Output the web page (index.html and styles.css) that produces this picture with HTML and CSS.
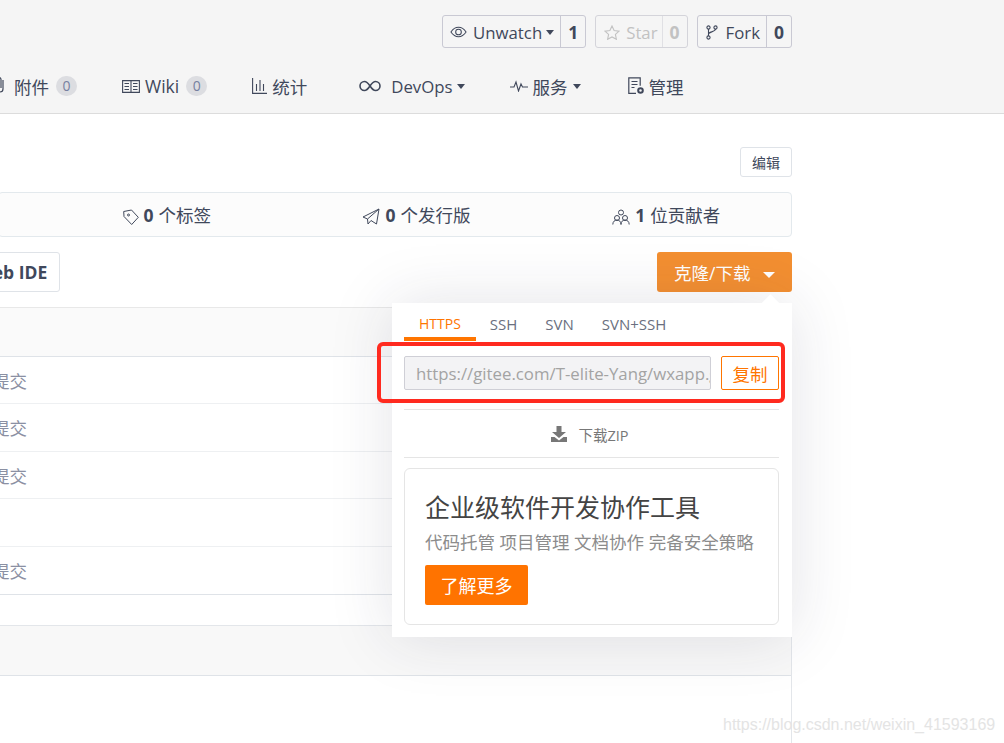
FILE: index.html
```html
<!DOCTYPE html>
<html lang="zh-CN">
<head>
    <meta charset="UTF-8">
    <title>wxapp</title>
    <link rel="stylesheet" href="styles.css">
</head>
<body>

    <div class="header">
        <div class="wrap">
            <div class="actions">
                <div class="action watch">
                    <span class="action-main">
                        <svg width="17" height="12" viewBox="0 0 18 12" fill="none" stroke="currentColor" stroke-width="1.1"><path d="M1 6c2-3 5-5 8-5s6 2 8 5c-2 3-5 5-8 5S3 9 1 6z"/><circle cx="9" cy="6" r="3"/></svg>
                        <span>Unwatch</span> <i class="caret"></i>
                    </span>
                    <b class="action-count">1</b>
                </div>
                <div class="action disabled">
                    <span class="action-main">
                        <svg width="16" height="15" viewBox="0 0 16 15" fill="none" stroke="currentColor" stroke-width="1.1"><path d="M8 1l2.1 4.500 4.900.6-3.600 3.300 1 4.900L8 11.900l-4.400 2.400 1-4.900L1 6.100l4.900-.6z"/></svg>
                        <span>Star</span>
                    </span>
                    <b class="action-count">0</b>
                </div>
                <div class="action">
                    <span class="action-main">
                        <svg class="fork-icon" width="12" height="15" viewBox="0 0 12 15" fill="none" stroke="currentColor" stroke-width="1.1"><circle cx="2.500" cy="2.500" r="1.600"/><circle cx="2.500" cy="12.500" r="1.600"/><circle cx="9.500" cy="2.500" r="1.600"/><path d="M2.500 4.100v6.800M9.500 4.100c0 3-7 2.500-7 5"/></svg>
                        <span>Fork</span>
                    </span>
                    <b class="action-count">0</b>
                </div>
            </div>
            <div class="nav">
                <a class="nav-item first">
                    <svg class="clip-icon" width="12" height="17" viewBox="0 0 12 17" fill="none" stroke="currentColor" stroke-width="1.200"><path d="M9 4v9a3 3 0 0 1-6 0V3.500a2 2 0 0 1 4 0V12"/></svg>
                    附件 <span class="badge">0</span>
                </a>
                <a class="nav-item">
                    <svg width="18" height="13" viewBox="0 0 18 13" fill="none" stroke="currentColor" stroke-width="1.100"><path d="M.6.600h16.800v11.800H.6zM9 .6v11.800M2.500 3.500h4.500M2.500 6.500h4.500M2.500 9.500h4.500M11 3.500h4.500M11 6.500h4.500M11 9.500h4.500"/></svg>
                    Wiki <span class="badge">0</span>
                </a>
                <a class="nav-item">
                    <svg width="15" height="16" viewBox="0 0 15 16" fill="none" stroke="currentColor" stroke-width="1.100"><path d="M.6 0v15.400H15M4.500 6v7M8 2v11M11.500 6v7"/></svg>
                    统计
                </a>
                <a class="nav-item devops">
                    <svg width="22" height="12" viewBox="0 0 22 12" fill="none" stroke="currentColor" stroke-width="1.600"><path d="M11 6C9 3 7.500 1.500 5.500 1.500a4.500 4.500 0 0 0 0 9C7.500 10.500 9 9 11 6s3.500-4.500 5.500-4.500a4.500 4.500 0 0 1 0 9C14.500 10.500 13 9 11 6z"/></svg>
                    <span class="nav-text">DevOps</span> <i class="caret"></i>
                </a>
                <a class="nav-item">
                    <svg width="18" height="12" viewBox="0 0 18 12" fill="none" stroke="currentColor" stroke-width="1.100"><path d="M0 7h4l2-5 2.500 9L11 4l1.500 3H18"/></svg>
                    服务 <i class="caret"></i>
                </a>
                <a class="nav-item manage">
                    <svg width="16" height="18" viewBox="0 0 16 18" fill="none" stroke="currentColor" stroke-width="1.200"><path d="M8 16.400H.8V.8h11.400v8M3.500 4.500h6M3.500 7.500h6M3.500 10.500h3"/><circle cx="12.500" cy="13.500" r="2.300" stroke-width="2"/></svg>
                    管理
                </a>
            </div>
        </div>
    </div>

    <div class="wrap content">
        <div class="desc-bar">
            <button class="btn-edit">编辑</button>
        </div>

        <div class="stats">
            <div class="stat">
                <svg width="16" height="16" viewBox="0 0 16 16" fill="none" stroke="currentColor" stroke-width="1"><path d="M1 7.500L.7 2.500 8.500 1l6.800 7.300-6.600 7.200z"/><circle cx="5.500" cy="6" r="1"/></svg>
                <b>0</b> 个标签
            </div>
            <div class="stat">
                <svg width="18" height="17" viewBox="0 0 18 17" fill="none" stroke="currentColor" stroke-width="1"><path d="M17 1L1 9l4.500 2L17 1l-2.500 15-5.500-3.500-3 3.500-.5-5"/></svg>
                <b>0</b> 个发行版
            </div>
            <div class="stat">
                <svg width="18" height="16" viewBox="0 0 18 16" fill="none" stroke="currentColor" stroke-width="1"><circle cx="9" cy="3.500" r="2.500"/><circle cx="5" cy="9" r="2.500"/><circle cx="13" cy="9" r="2.500"/><path d="M.8 15.500c0-3 2-4.500 4.200-4.500s4 1.500 4 4.500c0-3 1.800-4.500 4-4.500s4.200 1.500 4.200 4.500"/></svg>
                <b>1</b> 位贡献者
            </div>
        </div>

        <div class="toolbar">
            <button class="btn-ide">Web IDE</button>
            <button class="btn-clone">克隆/下载 <i class="caret"></i></button>
        </div>

        <div class="files">
            <div class="files-head"></div>
            <div class="file-row">提交</div>
            <div class="file-row tall">提交</div>
            <div class="file-row">提交</div>
            <div class="file-row tall"></div>
            <div class="file-row tall last">提交</div>
            <div class="file-spacer"></div>
            <div class="readme-head"></div>
            <div class="readme-body"></div>
        </div>

        <div class="clone-panel">
            <i class="panel-arrow"></i>
            <div class="tabs">
                <span class="tab active">HTTPS</span>
                <span class="tab">SSH</span>
                <span class="tab">SVN</span>
                <span class="tab">SVN+SSH</span>
            </div>
            <div class="url-row">
                <input class="url-input" value="https://gitee.com/T-elite-Yang/wxapp.git" disabled>
                <button class="btn-copy">复制</button>
            </div>
            <div class="zip-row">
                <svg width="16" height="16" viewBox="0 0 16 16" fill="currentColor"><path d="M5.500 0h5v6H15L8 12 1 6h4.500zM0 11h3.500L8 14.500 12.500 11H16v5H0z"/></svg>
                下载ZIP
            </div>
            <div class="promo">
                <div class="promo-title">企业级软件开发协作工具</div>
                <div class="promo-sub">代码托管 项目管理 文档协作 完备安全策略</div>
                <button class="btn-more">了解更多</button>
            </div>
        </div>

        <div class="highlight"></div>
    </div>

    <div class="watermark">https://blog.csdn.net/weixin_41593169</div>

</body>
</html>
```

FILE: styles.css
```css
* {
    box-sizing: border-box;
}

body {
    margin: 0;
    height: 743px;
    overflow: hidden;
    position: relative;
    background-color: #fff;
    color: #40485b;
    font-family: "Open Sans", "Noto Sans CJK SC", sans-serif;
    font-size: 17.5px;
}

button {
    font-family: inherit;
    cursor: pointer;
}

.wrap {
    width: 792px;
}

.caret {
    display: inline-block;
    border-top: 5px solid currentColor;
    border-left: 4.5px solid transparent;
    border-right: 4.5px solid transparent;
    vertical-align: middle;
}

/* header */
.header {
    height: 114px;
    background-color: #f5f5f5;
    border-bottom: 1px solid #dcdcdc;
}

.actions {
    display: flex;
    justify-content: flex-end;
    gap: 9px;
    padding-top: 15px;
}

.action {
    display: flex;
    height: 33px;
    border: 1px solid #c9c9d3;
    border-radius: 3px;
    font-size: 16.8px;
    line-height: 31px;
}

.action-main {
    display: flex;
    align-items: center;
    gap: 6px;
    padding: 1px 6px 0 8px;
    border-right: 1px solid #c9c9d3;
    white-space: nowrap;
}

.action-main .caret {
    margin-left: -2px;
}

.action.watch .action-main {
    padding-left: 7px;
}

.action-count {
    width: 24px;
    padding-top: 1px;
    font-size: 17.5px;
    text-align: center;
}

.fork-icon {
    margin-right: 2px;
}

.action.disabled {
    color: #c2c2c2;
    border-color: #d4d4da;
}

.action.disabled .action-main {
    padding-right: 4px;
    border-color: #e0e0e4;
}

.nav {
    display: flex;
    align-items: center;
    gap: 45px;
    margin-top: 22px;
    height: 32px;
    white-space: nowrap;
}

.nav-item {
    display: flex;
    align-items: center;
    gap: 5px;
}

.nav-item.first {
    margin-left: -6px;
    gap: 8px;
}

.nav-item.first .badge {
    margin-left: -1px;
}

.clip-icon {
    margin-top: -3px;
}

.nav-item.devops {
    margin-left: 7px;
    gap: 10px;
}

.nav-item.manage {
    margin-left: 2px;
}

.nav-text {
    margin-right: -6px;
    font-size: 16.8px;
}

.badge {
    width: 21px;
    height: 20px;
    margin-left: 2px;
    border-radius: 10px;
    background-color: #dcdde1;
    color: #7680a0;
    font-size: 14px;
    line-height: 20px;
    text-align: center;
}

/* content */
.content {
    position: relative;
}

.desc-bar {
    display: flex;
    justify-content: flex-end;
    padding-top: 33px;
}

.btn-edit {
    width: 52px;
    height: 30px;
    padding: 0;
    background-color: #fff;
    border: 1px solid #dfe3e8;
    border-radius: 3px;
    color: #40485b;
    font-size: 14px;
}

.stats {
    display: grid;
    grid-template-columns: repeat(3, 1fr);
    height: 45px;
    margin: 15px 0 0 -2px;
    padding-left: 43px;
    background-color: #fcfcfc;
    border: 1px solid #e3e9ed;
    border-radius: 4px;
}

.stat {
    display: flex;
    align-items: center;
    justify-content: center;
    gap: 5px;
}

.stat svg {
    margin-top: 4px;
}

.toolbar {
    display: flex;
    justify-content: space-between;
    margin-top: 15px;
}

.btn-ide {
    width: 100px;
    height: 40px;
    margin-left: -40px;
    padding: 0 0 0 3px;
    background-color: #fff;
    border: 1px solid #dfe3e8;
    border-radius: 3px;
    color: #40485b;
    font-size: 17.5px;
    font-weight: 700;
}

.btn-clone {
    width: 135px;
    height: 40px;
    padding: 0;
    background-color: #f38f31;
    border: none;
    border-radius: 3px;
    color: #fff;
    font-size: 17.5px;
}

.btn-clone .caret {
    margin-left: 8px;
    border-top-width: 6px;
    border-left-width: 6.5px;
    border-right-width: 6.5px;
}

.files {
    margin-top: 15px;
    border-right: 1px solid #e3e6ea;
}

.files-head {
    height: 50px;
    background-color: #fafafa;
    border-top: 1px solid #e8e8e8;
    border-bottom: 1px solid #dfe3e8;
}

.file-row {
    height: 47px;
    margin-left: -8px;
    border-bottom: 1px solid #eef0f2;
    color: #8b90a3;
    line-height: 49px;
}

.file-row.tall {
    height: 48px;
}

.file-row.last {
    border-bottom-color: #dfe3e8;
}

.file-spacer {
    height: 30px;
}

.readme-head {
    height: 51px;
    background-color: #f8f8f8;
    border-top: 1px solid #e3e6ea;
    border-bottom: 1px solid #dfe3e8;
}

.readme-body {
    height: 70px;
}

/* clone menu */
.clone-panel {
    position: absolute;
    top: 189px;
    right: 0;
    width: 400px;
    height: 334px;
    padding: 0 13px 0 12px;
    background-color: #fff;
    box-shadow: 0 0 60px rgba(40, 40, 70, 0.13);
}

.panel-arrow {
    position: absolute;
    top: -6px;
    right: 15px;
    width: 13px;
    height: 13px;
    background-color: #fff;
    transform: rotate(45deg);
}

.tabs {
    display: flex;
    height: 38px;
}

.tab {
    padding: 11px 14px 0;
    color: #6a7080;
    font-size: 15px;
    line-height: 20px;
}

.tab.active {
    padding: 11px 15px 0;
    color: #ff7500;
    border-bottom: 4px solid #ff7500;
    font-size: 14px;
}

.url-row {
    display: flex;
    gap: 10px;
    margin-top: 15px;
    padding-bottom: 19px;
    border-bottom: 1px solid #e5e5e5;
}

.url-input {
    width: 307px;
    height: 34px;
    padding: 1px 0 0 11px;
    background-color: #f3f3f5;
    border: 1px solid #cfcfd6;
    border-radius: 2px;
    color: #a3a3a3;
    font-family: "Open Sans", sans-serif;
    font-size: 16.8px;
}

.btn-copy {
    width: 58px;
    height: 34px;
    padding: 0;
    background-color: #fff;
    border: 1px solid #ff7500;
    border-radius: 2px;
    color: #ff7500;
    font-size: 17.5px;
}

.zip-row {
    display: flex;
    align-items: center;
    justify-content: center;
    gap: 11px;
    height: 48px;
    padding: 1px 3px 0 0;
    border-bottom: 1px solid #e5e5e5;
    color: #777;
    font-size: 14.5px;
}

.promo {
    height: 157px;
    margin-top: 10px;
    padding: 20px;
    border: 1px solid #e5e5e5;
    border-radius: 6px;
}

.promo-title {
    color: #444;
    font-size: 25px;
    line-height: 36px;
}

.promo-sub {
    color: #8c8c8c;
    font-size: 17.5px;
    line-height: 35px;
    white-space: nowrap;
}

.btn-more {
    display: block;
    width: 103px;
    height: 40px;
    margin-top: 5px;
    padding: 0;
    background-color: #ff7300;
    border: none;
    border-radius: 2px;
    color: #fff;
    font-size: 18px;
}

/* red mark drawn over the screenshot */
.highlight {
    position: absolute;
    top: 228px;
    left: 377px;
    width: 408px;
    height: 61px;
    border: 4px solid #ff2a1f;
    border-radius: 6px;
}

.watermark {
    position: absolute;
    top: 716px;
    left: 723px;
    color: #e4e4e4;
    font-family: "Liberation Sans", sans-serif;
    font-size: 16px;
    white-space: nowrap;
}
```
